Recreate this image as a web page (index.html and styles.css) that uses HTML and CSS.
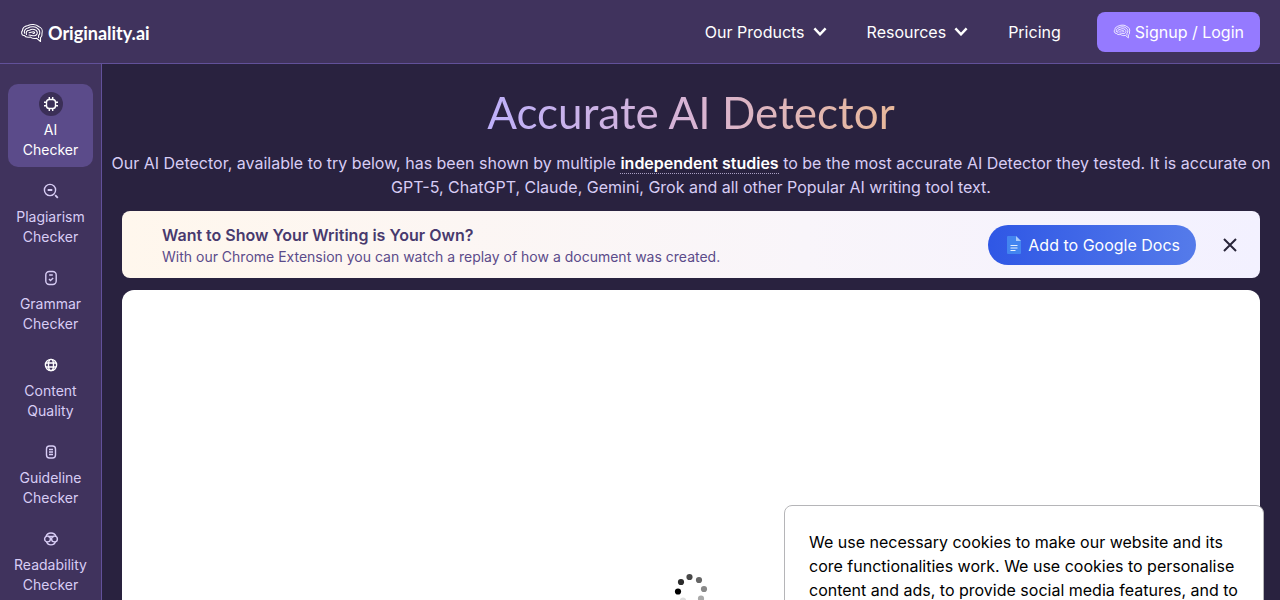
FILE: index.html
```html
<!DOCTYPE html>
<html lang="en">
<head>
  <meta charset="UTF-8">
  <meta name="viewport" content="width=device-width, initial-scale=1.0">
  <title>Accurate AI Detector - Originality.ai</title>
  <link rel="stylesheet" href="styles.css">
</head>
<body>
  <svg class="sprite" aria-hidden="true">
    <symbol id="brain" viewBox="0 0 24 20">
      <g fill="none" stroke="currentColor" stroke-width="1.1" stroke-linecap="round" stroke-linejoin="round">
        <path d="M3.500 12.500C1.500 12 1 9 2.500 7.500C2.500 4.500 5.500 3 8 2.500C11 1 16 1 18.500 3.500C21.500 4.500 23 7.500 22 10.500C22.300 13 21.500 14 20.500 14.700L20.500 18.500L16.500 15.200C13.500 16 11.500 15.200 10.500 14C7.500 14.500 5 14 4.500 12.500"/>
        <path d="M4.500 10.200C3.800 8 5 5.500 8 5C11 3 16 3.500 17.500 5.500C20 7 20.700 10.500 18.500 12.500L18.600 14.500"/>
        <path d="M6.500 11.500C5.500 9 7 7.200 9.500 7.200C12.500 5.200 16.500 6.500 17.200 9C17.700 11 16.500 12.300 14.500 12.700C12.500 13 11.500 12 9 12"/>
        <path d="M9 9.700C11 9.500 11.500 8.800 13.500 8.800C15.200 9.200 14.800 10.600 13 10.500"/>
      </g>
    </symbol>
    <symbol id="chevron" viewBox="0 0 12 8">
      <path d="M1 1.300L6 6.500L11 1.300" fill="none" stroke="currentColor" stroke-width="2.200"/>
    </symbol>
  </svg>

  <header class="header">
    <a class="logo" href="#"><svg class="logo-icon"><use href="#brain"/></svg>Originality.ai</a>
    <nav class="nav">
      <button class="nav-item">Our Products <svg class="chevron"><use href="#chevron"/></svg></button>
      <button class="nav-item">Resources <svg class="chevron"><use href="#chevron"/></svg></button>
      <a class="nav-item" href="#">Pricing</a>
      <a class="signup" href="#"><svg class="signup-icon"><use href="#brain"/></svg>Signup / Login</a>
    </nav>
  </header>

  <div class="layout">
    <nav class="sidebar">
      <a class="side-item active" href="#">
        <span class="side-icon"><svg viewBox="0 0 16 16"><rect x="3.500" y="3.500" width="9" height="9" rx="2.800"/><path d="M6.300 1V3.500M9.700 1V3.500M6.300 12.500V15M9.700 12.500V15M1 6.300H3.500M1 9.700H3.500M12.500 6.300H15M12.500 9.700H15"/></svg></span>
        AI<br>Checker
      </a>
      <a class="side-item" href="#">
        <span class="side-icon"><svg viewBox="0 0 16 16"><circle cx="7" cy="7" r="5.600"/><path d="M4.700 7h4.600M12.200 12.200l2.600 2.600" stroke-width="1.800"/></svg></span>
        Plagiarism Checker
      </a>
      <a class="side-item" href="#">
        <span class="side-icon"><svg viewBox="0 0 16 16"><rect x="2.800" y="1.500" width="10.400" height="13" rx="3.500"/><path d="M6.200 5h3.600M6 9l1.500 1.500L10.200 8"/></svg></span>
        Grammar Checker
      </a>
      <a class="side-item" href="#">
        <span class="side-icon globe"><svg viewBox="0 0 16 16"><circle cx="8" cy="8" r="5.600"/><ellipse cx="8" cy="8" rx="2.500" ry="5.600"/><path d="M3 6h10M3 10h10"/></svg></span>
        Content Quality
      </a>
      <a class="side-item" href="#">
        <span class="side-icon"><svg viewBox="0 0 16 16"><rect x="3.500" y="2" width="9" height="12" rx="3"/><path d="M6 5.500h4M6 8h4M6 10.500h4"/></svg></span>
        Guideline Checker
      </a>
      <a class="side-item" href="#">
        <span class="side-icon"><svg viewBox="0 0 16 16"><circle cx="4.500" cy="8" r="2.900"/><circle cx="11.500" cy="8" r="2.900"/><path d="M3 5.500C4.500 .8 11.500 .8 13 5.500M3.500 10.500C5 15 11 15 12.500 10.500M5 5.500h6"/></svg></span>
        Readability Checker
      </a>
    </nav>

    <main class="main">
      <h1 class="title"><span>Accurate AI Detector</span></h1>
      <p class="intro">Our AI Detector, available to try below, has been shown by multiple <a href="#">independent studies</a> to be the most accurate AI Detector they tested. It is accurate on<br>GPT-5, ChatGPT, Claude, Gemini, Grok and all other Popular AI writing tool text.</p>

      <section class="banner">
        <div class="banner-text">
          <h2>Want to Show Your Writing is Your Own?</h2>
          <p>With our Chrome Extension you can watch a replay of how a document was created.</p>
        </div>
        <button class="docs-button">
          <svg class="docs-icon" viewBox="0 0 14 18"><path d="M1 0h8l5 5v12a1 1 0 0 1-1 1H1a1 1 0 0 1-1-1V1a1 1 0 0 1 1-1z" fill="#4385f0"/><path d="M9 0l5 5H9z" fill="#a9cbfb"/><path d="M3.500 9.500h7M3.500 12h7M3.500 14.500h5" stroke="#e6f0ff"/></svg>
          Add to Google Docs
        </button>
        <button class="close" aria-label="Close"><svg viewBox="0 0 14 14"><path d="M1 1l12 12M13 1L1 13"/></svg></button>
      </section>

      <section class="scanner">
        <svg class="spinner" viewBox="0 0 36 36">
          <circle cx="5" cy="19.500" r="3.100" fill="#000"/>
          <circle cx="8" cy="10" r="3.100" fill="#2b2b2b"/>
          <circle cx="16.500" cy="5" r="3.100" fill="#484848"/>
          <circle cx="26" cy="8" r="3.100" fill="#666"/>
          <circle cx="31" cy="17" r="3.100" fill="#888"/>
          <circle cx="28" cy="26.500" r="3.100" fill="#aaa"/>
          <circle cx="19" cy="31" r="3.100" fill="#ccc"/>
          <circle cx="10" cy="28.500" r="3.100" fill="#ddd"/>
        </svg>
      </section>
    </main>
  </div>

  <div class="cookies" role="dialog" aria-label="Cookies">
    <p>We use necessary cookies to make our website and its core functionalities work. We use cookies to personalise content and ads, to provide social media features, and to</p>
  </div>
</body>
</html>
```
FILE: styles.css
```css
body {
  margin: 0;
  height: 100vh;
  overflow: hidden;
  display: flex;
  flex-direction: column;
  background-color: #29223f;
  color: #fff;
  font-family: Inter, "Liberation Sans", sans-serif;
  font-size: 16px;
  line-height: 24px;
}

a {
  color: inherit;
  text-decoration: none;
}

button {
  border: none;
  padding: 0;
  background: none;
  color: inherit;
  font: inherit;
  cursor: pointer;
}

h1, h2, p {
  margin: 0;
}

.sprite {
  display: none;
}

/* header */
.header {
  height: 63px;
  flex: none;
  display: flex;
  align-items: center;
  justify-content: space-between;
  padding: 0 20px;
  background-color: #40335d;
  border-bottom: 1px solid #62519a;
}

.logo {
  display: flex;
  align-items: center;
  gap: 4px;
  padding-top: 2px;
  font-family: Lato, "Liberation Sans", sans-serif;
  font-size: 18px;
  font-weight: 700;
}

.logo-icon {
  width: 24px;
  height: 20px;
}

.nav {
  display: flex;
  align-items: center;
  gap: 36px;
}

.nav-item {
  display: flex;
  align-items: center;
  gap: 8px;
}

button.nav-item {
  margin-right: 4px;
}

.chevron {
  width: 14px;
  height: 9px;
}

.signup {
  display: flex;
  align-items: center;
  gap: 4px;
  height: 40px;
  padding: 0 16px;
  border-radius: 8px;
  background-color: #957aff;
}

.signup-icon {
  width: 18px;
  height: 15px;
}

/* sidebar */
.layout {
  display: flex;
  flex: 1;
  min-height: 0;
}

.sidebar {
  box-sizing: border-box;
  width: 102px;
  flex: none;
  display: flex;
  flex-direction: column;
  gap: 4px;
  padding: 20px 8px;
  overflow-y: auto;
  scrollbar-width: none;
  background-color: #40335d;
  border-right: 1px solid #62519a;
}

.side-item {
  flex: none;
  padding: 8px 4px 7px;
  border-radius: 10px;
  color: #d8cdf5;
  font-size: 14px;
  line-height: 20px;
  text-align: center;
}

.side-item.active {
  background-color: #5b4b8a;
  color: #fff;
}

.side-icon {
  display: flex;
  align-items: center;
  justify-content: center;
  width: 24px;
  height: 24px;
  margin: 0 auto 4px;
  border-radius: 50%;
}

.active .side-icon {
  background-color: #3b2f57;
}

.side-icon svg {
  width: 16px;
  height: 16px;
  fill: none;
  stroke: currentColor;
  stroke-width: 1.4;
}

.globe {
  color: #fff;
}

/* content */
.main {
  flex: 1;
  min-width: 0;
  padding: 20px;
  overflow-y: auto;
  scrollbar-width: none;
}

.title {
  margin-bottom: 11px;
  font-family: Lato, "Liberation Sans", sans-serif;
  font-size: 44px;
  font-weight: 400;
  line-height: 56px;
  text-align: center;
}

.title span {
  background: linear-gradient(90deg, #beb0fa, #d8b4d4 50%, #e8b89a);
  -webkit-background-clip: text;
  background-clip: text;
  color: transparent;
}

.intro {
  margin: 0 -16px 12px;
  color: #d8cdf5;
  text-align: center;
}

.intro a {
  color: #fff;
  font-weight: 600;
  border-bottom: 1px dotted #a99fc4;
}

.banner {
  display: flex;
  align-items: center;
  padding: 12px 20px 11px 40px;
  margin-bottom: 12px;
  border-radius: 8px;
  background: linear-gradient(90deg, #fff7ed, #f9f5fa 60%, #f3f1ff);
}

.banner-text {
  flex: 1;
}

.banner h2 {
  color: #483a6e;
  font-size: 16px;
  font-weight: 600;
  line-height: 24px;
}

.banner p {
  color: #5b4b8a;
  font-size: 14px;
  line-height: 20px;
}

.docs-button {
  display: flex;
  align-items: center;
  gap: 7px;
  height: 40px;
  padding: 0 16px 0 19px;
  border-radius: 20px;
  background: linear-gradient(90deg, #2f57e5, #557bea);
}

.docs-icon {
  width: 14px;
  height: 18px;
}

.close {
  display: flex;
  padding: 3px;
  margin-left: 24px;
}

.close svg {
  width: 14px;
  height: 14px;
  stroke: #29263a;
  stroke-width: 2;
}

.scanner {
  display: flex;
  align-items: center;
  justify-content: center;
  min-height: 600px;
  border-radius: 12px;
  background-color: #fff;
}

.spinner {
  width: 36px;
  height: 36px;
}

/* cookie notice */
.cookies {
  position: fixed;
  top: 505px;
  right: 16px;
  box-sizing: border-box;
  width: 480px;
  padding: 24px;
  border: 1px solid #b5b5b8;
  border-radius: 8px;
  background-color: #fff;
  color: #000;
}
```
